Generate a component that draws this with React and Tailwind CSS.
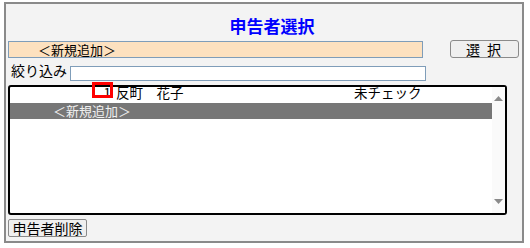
import React from 'react';

const font = { fontFamily: '"Noto Sans CJK JP", "Noto Sans", sans-serif' };

function ScrollArrow({ down }) {
  return (
    <svg width="9" height="5" viewBox="0 0 9 5" className="block">
      {down ? <polygon points="0,0 9,0 4.5,5" fill="#8a8a8a" /> : <polygon points="0,5 9,5 4.5,0" fill="#8a8a8a" />}
    </svg>
  );
}

export default function App() {
  return (
    <div className="bg-white w-[530px] h-[248px] pt-[2px] pl-[4px]" style={font}>
      <div className="relative w-[520px] h-[241px] border-2 border-[#8a8a8a] bg-[#f3f3f3] px-[2px] text-black">
        <div className="h-[36px] pt-[11px] pl-[16px] text-center text-[17px] leading-[22px] font-bold text-[#0000ff]">
          申告者選択
        </div>

        <div className="flex items-center h-[18px]">
          <div className="w-[415px] h-[17px] border border-[#7f9db9] bg-[#fde1bf] pl-[29px] text-[13px] leading-[15px] whitespace-nowrap">
            ＜新規追加＞
          </div>
          <button className="ml-[27px] w-[69px] h-[18px] rounded-[3px] border border-[#8a8a8a] bg-[#efefef] text-[14px] leading-[16px] tracking-[2px]">
            選 択
          </button>
        </div>

        <div className="flex items-end h-[23px]">
          <span className="pl-[3px] w-[62px] text-[14px] leading-[18px] mb-[2px] whitespace-nowrap">絞り込み</span>
          <input className="w-[356px] h-[15px] border border-[#7f9db9] bg-white outline-none" />
        </div>

        <div className="relative mt-[4px] w-[499px] h-[130px] border-2 border-black rounded-[3px] bg-white">
          <div className="w-[482px] text-[13.5px]">
            <div className="flex items-start h-[16px] leading-[8px] pt-[1px] whitespace-nowrap">
              <span className="w-[101px] text-right">1</span>
              <span className="w-[243px] pl-[5px]">反町　花子</span>
              <span>未チェック</span>
            </div>
            <div className="h-[16px] leading-[16px] bg-[#777777] text-[#f0f0f0] pl-[43px] text-[13px] whitespace-nowrap">
              ＜新規追加＞
            </div>
          </div>
          <div className="absolute right-0 top-0 bottom-0 w-[13px] bg-[#fafafa] flex flex-col items-center justify-between pt-[9px] pb-[9px]">
            <ScrollArrow />
            <ScrollArrow down />
          </div>
          <div className="absolute left-[82px] top-[-5px] w-[21px] h-[16px] border-[3px] border-[#ff0000]" />
        </div>

        <button className="mt-[4px] w-[79px] h-[18px] rounded-[2px] border border-[#8a8a8a] bg-[#efefef] text-[14px] leading-[16px] whitespace-nowrap">
          申告者削除
        </button>
      </div>
    </div>
  );
}
